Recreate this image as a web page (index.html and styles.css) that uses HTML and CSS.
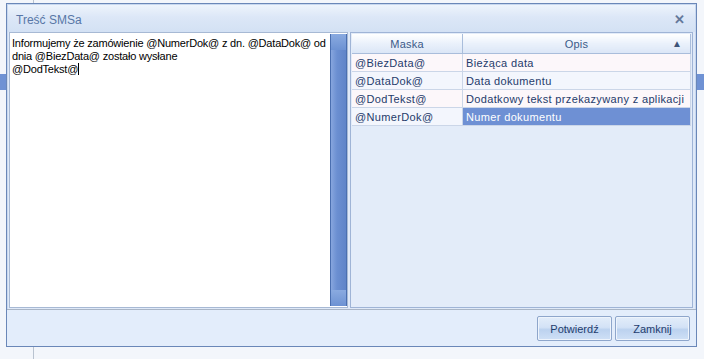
FILE: index.html
```html
<!DOCTYPE html>
<html lang="pl">
<head>
  <meta charset="UTF-8">
  <title>Treść SMSa</title>
  <link rel="stylesheet" href="styles.css">
</head>
<body>
  <div class="dialog">
    <div class="titlebar">
      <span class="title">Treść SMSa</span>
      <span class="close">&#x2715;</span>
    </div>
    <div class="content">
      <div class="editor">
        <div class="text">Informujemy że zamówienie @NumerDok@ z dn. @DataDok@ od dnia @BiezData@ zostało wysłane<br>@DodTekst@<span class="caret"></span></div>
        <div class="scrollbar">
          <div class="sb-btn"></div>
          <div class="sb-track"></div>
          <div class="sb-btn"></div>
        </div>
      </div>
      <div class="grid">
        <table>
          <thead>
            <tr>
              <th class="col-mask">Maska</th>
              <th class="col-desc">Opis <span class="sort">&#9650;</span></th>
            </tr>
          </thead>
          <tbody>
            <tr class="odd"><td>@BiezData@</td><td>Bieżąca data</td></tr>
            <tr class="even"><td>@DataDok@</td><td>Data dokumentu</td></tr>
            <tr class="odd"><td>@DodTekst@</td><td>Dodatkowy tekst przekazywany z aplikacji</td></tr>
            <tr class="even"><td>@NumerDok@</td><td class="selected">Numer dokumentu</td></tr>
          </tbody>
        </table>
      </div>
    </div>
    <div class="footer">
      <button class="btn">Potwierdź</button>
      <button class="btn">Zamknij</button>
    </div>
  </div>
</body>
</html>
```

FILE: styles.css
```css
html, body {
  margin: 0;
  height: 100%;
}

body {
  font-family: "Liberation Sans", Arial, sans-serif;
  font-size: 11px;
  overflow: hidden;
  background-color: #f3f6fb;
  background-image:
    linear-gradient(to bottom, transparent 74px, #6f92d4 74px, #6f92d4 90px, transparent 90px),
    linear-gradient(to right, transparent 33px, #b9c3d0 33px, #b9c3d0 34px, transparent 34px);
  padding-top: 3px;
  box-sizing: border-box;
}

.dialog {
  margin-left: 6px;
  width: 691px;
  height: 344px;
  box-sizing: border-box;
  border: 1px solid #6a87b8;
  box-shadow: inset 0 0 0 1px #c8d8ef;
  background: #dfe9f8;
  display: flex;
  flex-direction: column;
}

.titlebar {
  height: 27px;
  flex: none;
  display: flex;
  align-items: center;
  justify-content: space-between;
  padding: 0 10px 0 8px;
  background: linear-gradient(to bottom, #eef4fc 0%, #dce7f7 45%, #d3e1f4 100%);
  border: 1px solid #c8d8ef;
  border-bottom: none;
}

.title {
  font-size: 12px;
  color: #5877a6;
  padding-top: 3px;
}

.close {
  font-size: 13px;
  font-weight: bold;
  color: #64789a;
  padding-top: 2px;
}

.content {
  height: 276px;
  flex: none;
  display: flex;
  gap: 2px;
  padding: 0 3px 0 2px;
}

.editor {
  width: 339px;
  flex: none;
  display: flex;
  background: #fff;
  border: 1px solid #a7b9d4;
  box-sizing: border-box;
}

.text {
  flex: 1;
  padding: 4px 0 0 2px;
  line-height: 13px;
  letter-spacing: -0.2px;
  color: #000;
}

.caret {
  display: inline-block;
  width: 1px;
  height: 12px;
  background: #000;
  vertical-align: -2px;
}

.scrollbar {
  width: 17px;
  flex: none;
  display: flex;
  flex-direction: column;
  margin: 1px 0;
  background: #6d92d3;
  border-left: 1px solid #4a6fb0;
  border-right: 1px solid #4a6fb0;
  box-sizing: border-box;
}

.sb-btn {
  height: 16px;
  background: linear-gradient(to bottom, #8aaae0, #6d92d3);
}

.sb-track {
  flex: 1;
  background: linear-gradient(to right, #87a6de, #6b8fd1 40%, #5f84c8);
}

.grid {
  flex: 1;
  background: #e3ecf9;
  border: 1px solid #9fb4d6;
  padding: 1px 0 0 1px;
}

table {
  border-collapse: collapse;
  width: 339px;
  color: #1f3b6b;
}

th {
  height: 19px;
  font-weight: normal;
  text-align: center;
  color: #3b5a88;
  letter-spacing: 0.2px;
  background: linear-gradient(to bottom, #ffffff, #eaf1fb 50%, #dbe6f6);
  border-right: 1px solid #a9bddb;
  border-bottom: 1px solid #a9bddb;
  padding: 0;
}

.col-mask {
  width: 110px;
}

.col-desc {
  position: relative;
}

.sort {
  position: absolute;
  right: 8px;
  top: 4px;
  font-size: 10px;
  color: #3d5478;
}

td {
  height: 17px;
  padding: 0 0 0 3px;
  letter-spacing: 0.35px;
  border-right: 1px solid #cbd6e8;
  border-bottom: 1px solid #cbd6e8;
  white-space: nowrap;
}

tr.odd td {
  background: #fcf7fa;
}

tr.even td {
  background: #f3f6fd;
}

td.selected,
tr.even td.selected {
  background: #6e90d4;
  color: #fff;
}

.footer {
  flex: 1;
  margin-top: 1px;
  border-top: 1px solid #a9b5c6;
  background: #e3edfb;
  display: flex;
  justify-content: flex-end;
  align-items: flex-start;
  gap: 3px;
  padding: 6px 6px 0 0;
}

.btn {
  width: 75px;
  height: 25px;
  font-family: "Liberation Sans", Arial, sans-serif;
  font-size: 11px;
  color: #1f3d6e;
  border: 1px solid #8ea6cb;
  border-radius: 2px;
  background: linear-gradient(to bottom, #e3edfa 0%, #d3e2f6 45%, #bcd2ef 55%, #cfe0f6 100%);
  box-shadow: inset 0 0 0 1px #eef4fc;
  padding: 0;
}
```
